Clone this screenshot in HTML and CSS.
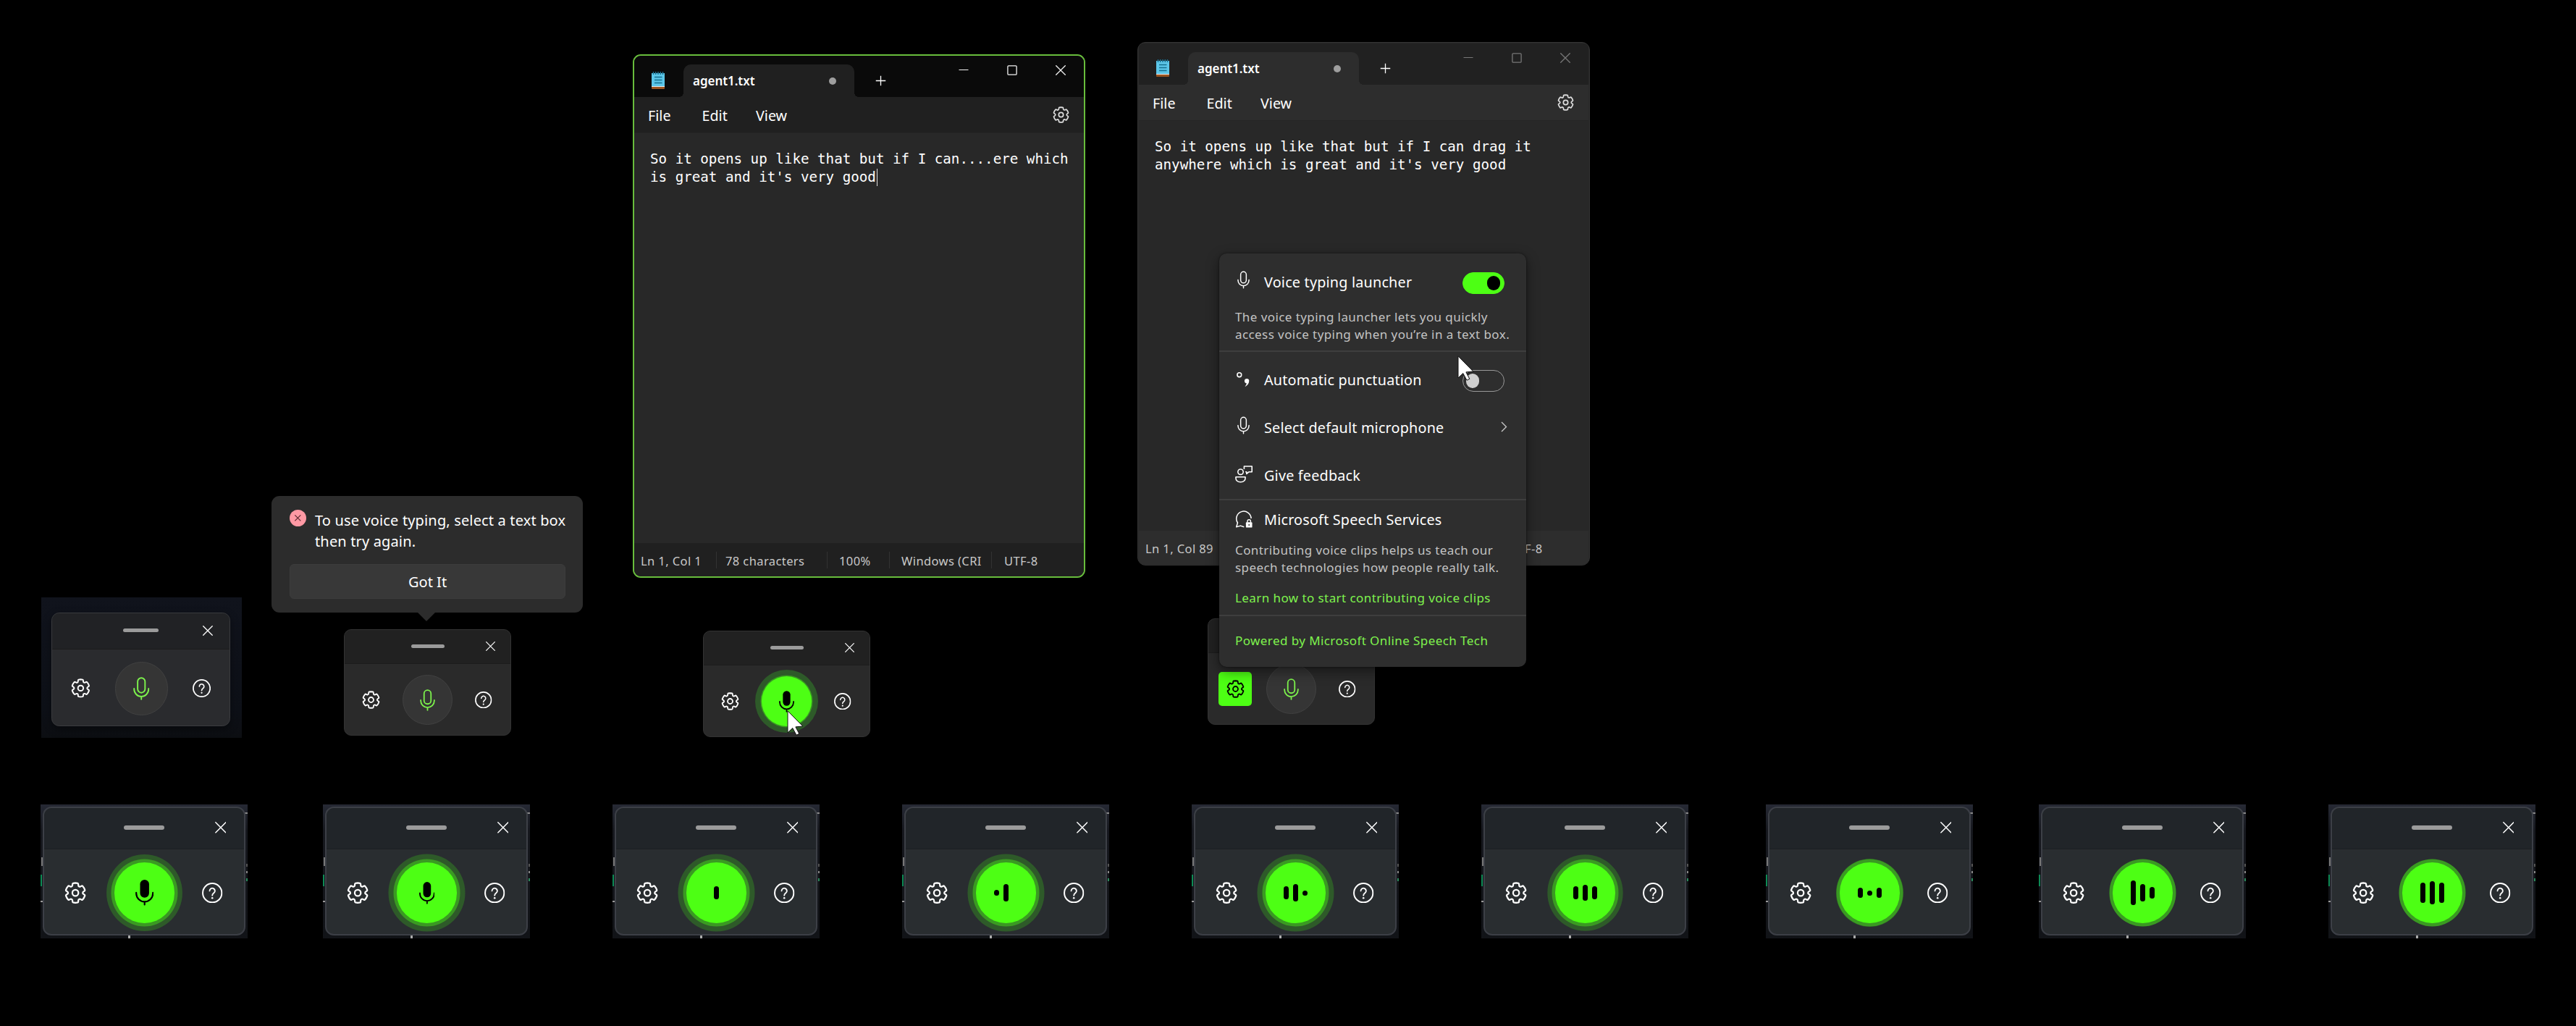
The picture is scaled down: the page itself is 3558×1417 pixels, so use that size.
FILE: index.html
```html
<!DOCTYPE html>
<html lang="en">
<head>
<meta charset="utf-8">
<title>Voice typing states</title>
<link rel="stylesheet" href="styles.css">
</head>
<body>
<svg class="sprite" aria-hidden="true">
  <symbol id="gear" viewBox="1.2 1.2 21.6 21.6"><g fill="none" stroke="currentColor" stroke-width="1.6" stroke-linejoin="round"><path d="M12.01 2.25C12.75 2.26 13.48 2.34 14.19 2.5C14.51 2.57 14.74 2.83 14.78 3.15L14.95 4.68C15.02 5.38 15.61 5.91 16.32 5.91C16.51 5.91 16.7 5.87 16.87 5.79L18.27 5.18C18.57 5.05 18.91 5.12 19.12 5.35C20.14 6.43 20.89 7.73 21.33 9.15C21.42 9.45 21.31 9.78 21.06 9.97L19.81 10.89C19.46 11.15 19.25 11.56 19.25 12C19.25 12.44 19.46 12.85 19.82 13.11L21.06 14.03C21.32 14.22 21.42 14.55 21.33 14.85C20.89 16.27 20.14 17.56 19.13 18.65C18.91 18.88 18.57 18.95 18.28 18.82L16.87 18.2C16.47 18.03 16.01 18.05 15.63 18.27C15.25 18.49 14.99 18.88 14.95 19.32L14.78 20.84C14.74 21.16 14.51 21.42 14.2 21.49C12.76 21.84 11.25 21.84 9.8 21.49C9.49 21.42 9.26 21.16 9.23 20.84L9.06 19.32C9.01 18.88 8.75 18.5 8.37 18.28C7.99 18.06 7.53 18.03 7.13 18.21L5.73 18.83C5.43 18.95 5.09 18.88 4.88 18.65C3.86 17.57 3.11 16.27 2.67 14.85C2.58 14.55 2.69 14.22 2.94 14.03L4.19 13.11C4.54 12.85 4.75 12.44 4.75 12C4.75 11.56 4.54 11.15 4.19 10.89L2.95 9.97C2.69 9.78 2.58 9.45 2.67 9.15C3.11 7.73 3.87 6.44 4.88 5.35C5.1 5.12 5.44 5.05 5.73 5.18L7.13 5.8C7.53 5.97 7.99 5.95 8.38 5.72C8.76 5.5 9.01 5.11 9.06 4.68L9.23 3.15C9.26 2.83 9.5 2.57 9.81 2.5C10.53 2.34 11.26 2.26 12.01 2.25Z"/><circle cx="12" cy="12" r="3"/></g></symbol>
  <symbol id="help" viewBox="0 0 24 24"><circle cx="12" cy="12" r="11.1" fill="none" stroke="currentColor" stroke-width="1.7"/><path d="M8.9 9.600a3.100 3.100 0 1 1 4.900 2.500c-1.200.9-1.800 1.500-1.800 2.800" fill="none" stroke="currentColor" stroke-width="1.6" stroke-linecap="round"/><circle cx="12" cy="18" r="1.1" fill="currentColor"/></symbol>
  <symbol id="mic" viewBox="0 0 22 31"><g fill="none" stroke="currentColor" stroke-width="1.9" stroke-linecap="round"><rect x="6" y="1" width="10" height="20" rx="5"/><path d="M1.2 15.5v.8a9.8 9.8 0 0 0 19.6 0v-.8M11 26.1v3.9"/></g></symbol>
  <symbol id="mic-solid" viewBox="0 0 22 31"><rect x="5.6" y="0" width="10.8" height="21.5" rx="5.4" fill="currentColor"/><path d="M1 15.5v.8a10 10 0 0 0 20 0v-.8M11 26.3v3.7" fill="none" stroke="currentColor" stroke-width="1.9" stroke-linecap="round"/></symbol>
  <symbol id="close" viewBox="0 0 14 14"><path d="M.7.7l12.6 12.6M13.3.7L.7 13.3" stroke="currentColor" stroke-width="1.3" stroke-linecap="round"/></symbol>
  <symbol id="minimize" viewBox="0 0 14 14"><path d="M.5 6.500h13" stroke="currentColor" stroke-width="1.2"/></symbol>
  <symbol id="maximize" viewBox="0 0 14 14"><rect x=".9" y=".9" width="12.2" height="12.2" rx="1.2" fill="none" stroke="currentColor" stroke-width="1.3"/></symbol>
  <symbol id="plus" viewBox="0 0 16 16"><path d="M8 .8v14.4M.8 8h14.4" stroke="currentColor" stroke-width="1.4"/></symbol>
  <symbol id="chevron" viewBox="0 0 9 15"><path d="M1 1l6.5 6.5L1 14" fill="none" stroke="currentColor" stroke-width="1.3"/></symbol>
  <symbol id="cursor" viewBox="0 0 23 35"><path d="M1 .8V31l6.800-6.400 5.200 9.600 3.800-1.900-4.900-9.400 9.900-.9Z" fill="#fff" stroke="#111" stroke-width="1"/></symbol>
  <symbol id="notepad" viewBox="0 0 18 24"><rect y="19" width="18" height="5" rx="1" fill="#9a5420"/><rect y="17" width="18" height="4" fill="#e8e8e8"/><rect y="2" width="18" height="18" fill="#5cc6e8"/><path d="M2.5 0v4M5.700 0v4M9 0v4M12.300 0v4M15.500 0v4" stroke="#1b6f8f" stroke-width="1.5"/><path d="M4 7.500h10.500M4 11.500h10.500M4 15.500h10.500" stroke="#14708f" stroke-width="1.5"/></symbol>
  <symbol id="punctuation" viewBox="0 0 18 20"><circle cx="3.8" cy="3.7" r="2.9" fill="none" stroke="currentColor" stroke-width="1.6"/><path d="M11.600 19.500c1.400-1.200 2.100-2.700 2.100-4.200a3.200 3.200 0 1 1 3.600-3.500c0 3.600-2 6.400-5.100 7.900Z" fill="currentColor"/></symbol>
  <symbol id="feedback" viewBox="0 0 24 24"><g fill="none" stroke="currentColor" stroke-width="1.6" stroke-linejoin="round"><circle cx="7.5" cy="8.7" r="3.7"/><path d="M1 15.800h13c.6 4.500-2.300 7-6.500 7S.4 20.300 1 15.800Z"/><path d="M12.400 5V1h10.800v7.800h-4.400l-3 2.600V8.800h-1.700"/></g></symbol>
  <symbol id="speech" viewBox="0 0 24 25"><path d="M22.500 11.500a10.600 10.600 0 1 0-19.400 6.200L1.300 23.600l6-1.600 5 1.600" fill="none" stroke="currentColor" stroke-width="1.6" stroke-linejoin="round"/><rect x="15" y="17" width="9" height="7.6" rx="1" fill="currentColor"/><path d="M17.200 17.500v-2a2.300 2.300 0 0 1 4.600 0v2" fill="none" stroke="currentColor" stroke-width="1.5"/><circle cx="19.5" cy="20.8" r="1" fill="#2e2e2e"/></symbol>
</svg>

<main class="board">
  <section class="notepad notepad--active">
    <header class="titlebar">
      <svg class="app-icon"><use href="#notepad"/></svg>
      <div class="tab"><span class="tab-name">agent1.txt</span><i class="unsaved"></i></div>
      <svg class="new-tab"><use href="#plus"/></svg>
      <nav class="controls"><svg><use href="#minimize"/></svg><svg><use href="#maximize"/></svg><svg><use href="#close"/></svg></nav>
    </header>
    <nav class="menubar"><span>File</span><span>Edit</span><span>View</span><svg><use href="#gear"/></svg></nav>
    <div class="editor">So it opens up like that but if I can....ere which<br>is great and it's very good<i class="caret"></i></div>
    <footer class="statusbar"><span class="c1">Ln 1, Col 1</span><span class="c2">78 characters</span><span class="c3">100%</span><span class="c4">Windows (CRI</span><span class="c5">UTF-8</span></footer>
  </section>

  <section class="notepad notepad--idle">
    <header class="titlebar">
      <svg class="app-icon"><use href="#notepad"/></svg>
      <div class="tab"><span class="tab-name">agent1.txt</span><i class="unsaved"></i></div>
      <svg class="new-tab"><use href="#plus"/></svg>
      <nav class="controls"><svg><use href="#minimize"/></svg><svg><use href="#maximize"/></svg><svg><use href="#close"/></svg></nav>
    </header>
    <nav class="menubar"><span>File</span><span>Edit</span><span>View</span><svg><use href="#gear"/></svg></nav>
    <div class="editor">So it opens up like that but if I can drag it<br>anywhere which is great and it's very good</div>
    <footer class="statusbar"><span class="c1">Ln 1, Col 89</span><span class="c2"></span><span class="c3"></span><span class="c4"></span><span class="c5">UTF-8</span></footer>
  </section>

  <div class="backdrop">
    <section class="voice voice--medium">
      <header><i class="handle"></i><svg class="close"><use href="#close"/></svg></header>
      <div class="tools"><svg class="gear"><use href="#gear"/></svg><span class="talk"><svg class="mic"><use href="#mic"/></svg></span><svg class="help"><use href="#help"/></svg></div>
    </section>
  </div>

  <aside class="teaching">
    <svg class="error" viewBox="0 0 23 23"><circle cx="11.5" cy="11.5" r="11.5" fill="#ff99a4"/><path d="M7.3 7.3l8 8M15.3 7.3l-8 8" stroke="#5c2a30" stroke-width="1.2"/></svg>
    <p>To use voice typing, select a text box<br>then try again.</p>
    <button>Got It</button>
  </aside>

  <section class="voice voice--ready">
    <header><i class="handle"></i><svg class="close"><use href="#close"/></svg></header>
    <div class="tools"><svg class="gear"><use href="#gear"/></svg><span class="talk"><svg class="mic"><use href="#mic"/></svg></span><svg class="help"><use href="#help"/></svg></div>
  </section>

  <section class="voice voice--pressed">
    <header><i class="handle"></i><svg class="close"><use href="#close"/></svg></header>
    <div class="tools"><svg class="gear"><use href="#gear"/></svg><span class="talk talk--on"><svg class="mic"><use href="#mic-solid"/></svg></span><svg class="help"><use href="#help"/></svg></div>
    <svg class="cursor"><use href="#cursor"/></svg>
  </section>

  <section class="voice voice--settings">
    <header></header>
    <div class="tools"><span class="gear-on"><svg class="gear"><use href="#gear"/></svg></span><span class="talk"><svg class="mic"><use href="#mic"/></svg></span><svg class="help"><use href="#help"/></svg></div>
  </section>

  <aside class="flyout">
    <div class="group group--launcher">
      <div class="row"><svg class="i-mic"><use href="#mic"/></svg><span>Voice typing launcher</span><i class="toggle toggle--on"></i></div>
      <p>The voice typing launcher lets you quickly<br>access voice typing when you’re in a text box.</p>
    </div>
    <div class="group group--options">
      <div class="row"><svg class="i-punct"><use href="#punctuation"/></svg><span>Automatic punctuation</span><i class="toggle"></i></div>
      <div class="row"><svg class="i-mic"><use href="#mic"/></svg><span>Select default microphone</span><svg class="chevron"><use href="#chevron"/></svg></div>
      <div class="row"><svg class="i-wide"><use href="#feedback"/></svg><span>Give feedback</span></div>
    </div>
    <div class="group group--speech">
      <div class="row"><svg class="i-wide"><use href="#speech"/></svg><span>Microsoft Speech Services</span></div>
      <p>Contributing voice clips helps us teach our<br>speech technologies how people really talk.</p>
      <a>Learn how to start contributing voice clips</a>
    </div>
    <div class="group group--powered"><a>Powered by Microsoft Online Speech Tech</a></div>
    <svg class="cursor"><use href="#cursor"/></svg>
  </aside>

  <div class="frame f1"><section class="voice"><header><i class="handle"></i><svg class="close"><use href="#close"/></svg></header><div class="tools"><svg class="gear"><use href="#gear"/></svg><span class="talk talk--on"><svg class="mic mic--large"><use href="#mic-solid"/></svg></span><svg class="help"><use href="#help"/></svg></div></section></div>
  <div class="frame f2"><section class="voice"><header><i class="handle"></i><svg class="close"><use href="#close"/></svg></header><div class="tools"><svg class="gear"><use href="#gear"/></svg><span class="talk talk--on"><svg class="mic"><use href="#mic-solid"/></svg></span><svg class="help"><use href="#help"/></svg></div></section></div>
  <div class="frame f3"><section class="voice"><header><i class="handle"></i><svg class="close"><use href="#close"/></svg></header><div class="tools"><svg class="gear"><use href="#gear"/></svg><span class="talk talk--on"><i class="bar" style="height:18px"></i></span><svg class="help"><use href="#help"/></svg></div></section></div>
  <div class="frame f4"><section class="voice"><header><i class="handle"></i><svg class="close"><use href="#close"/></svg></header><div class="tools"><svg class="gear"><use href="#gear"/></svg><span class="talk talk--on"><i class="bar" style="height:8px"></i><i class="bar" style="height:24px"></i><i class="bar" style="height:0"></i></span><svg class="help"><use href="#help"/></svg></div></section></div>
  <div class="frame f5"><section class="voice"><header><i class="handle"></i><svg class="close"><use href="#close"/></svg></header><div class="tools"><svg class="gear"><use href="#gear"/></svg><span class="talk talk--on"><i class="bar" style="height:18px"></i><i class="bar" style="height:24px"></i><i class="bar" style="height:7px"></i></span><svg class="help"><use href="#help"/></svg></div></section></div>
  <div class="frame f6"><section class="voice"><header><i class="handle"></i><svg class="close"><use href="#close"/></svg></header><div class="tools"><svg class="gear"><use href="#gear"/></svg><span class="talk talk--on"><i class="bar" style="height:18px"></i><i class="bar" style="height:22px"></i><i class="bar" style="height:18px"></i></span><svg class="help"><use href="#help"/></svg></div></section></div>
  <div class="frame f7"><section class="voice"><header><i class="handle"></i><svg class="close"><use href="#close"/></svg></header><div class="tools"><svg class="gear"><use href="#gear"/></svg><span class="talk talk--on"><i class="bar" style="height:14px"></i><i class="bar" style="height:7px"></i><i class="bar" style="height:14px"></i></span><svg class="help"><use href="#help"/></svg></div></section></div>
  <div class="frame f8"><section class="voice"><header><i class="handle"></i><svg class="close"><use href="#close"/></svg></header><div class="tools"><svg class="gear"><use href="#gear"/></svg><span class="talk talk--on"><i class="bar" style="height:34px"></i><i class="bar" style="height:24px"></i><i class="bar" style="height:16px"></i></span><svg class="help"><use href="#help"/></svg></div></section></div>
  <div class="frame f9"><section class="voice"><header><i class="handle"></i><svg class="close"><use href="#close"/></svg></header><div class="tools"><svg class="gear"><use href="#gear"/></svg><span class="talk talk--on"><i class="bar" style="height:28px"></i><i class="bar" style="height:32px"></i><i class="bar" style="height:28px"></i></span><svg class="help"><use href="#help"/></svg></div></section></div>
</main>
</body>
</html>
```
FILE: styles.css
```css
* { box-sizing: border-box; }

body {
  margin: 0;
  background: #000;
  color: #fff;
  font-family: "Noto Sans", "Open Sans", sans-serif;
}

svg { display: block; flex: none; }
i { display: block; }
.sprite { position: absolute; width: 0; height: 0; }

.board {
  position: relative;
  width: 3558px;
  height: 1417px;
  overflow: hidden;
}

/* Notepad windows */
.notepad {
  position: absolute;
  display: flex;
  flex-direction: column;
  width: 625px;
  height: 723px;
  border: 1px solid #333;
  border-radius: 11px;
  overflow: hidden;
  background: #282828;
  --bar: #2d2d2d;
  --title: #212121;
  --control: #777;
}
.notepad--active {
  left: 874px;
  top: 75px;
  border: 2px solid #68bd3c;
  --bar: #202020;
  --title: #0a0a0a;
  --control: #f2f2f2;
}
.notepad--idle { left: 1571px; top: 58px; padding: 1px; }

.titlebar {
  display: flex;
  height: 57px;
  background: var(--title);
}
.app-icon { width: 18px; height: 24px; margin: 22px 26px 0 24px; }
.tab {
  position: relative;
  display: flex;
  align-items: center;
  justify-content: space-between;
  width: 236px;
  height: 45px;
  margin-top: 12px;
  padding: 0 25px 0 13px;
  border-radius: 10px 10px 0 0;
  background: var(--bar);
}
.tab::before, .tab::after {
  content: "";
  position: absolute;
  bottom: 0;
  width: 6px;
  height: 6px;
}
.tab::before { left: -6px; background: radial-gradient(circle at 0 0, transparent 6px, var(--bar) 6px); }
.tab::after { right: -6px; background: radial-gradient(circle at 100% 0, transparent 6px, var(--bar) 6px); }
.tab-name { font-size: 17px; font-weight: 600; letter-spacing: -.05px; }
.unsaved { width: 10px; height: 10px; border-radius: 50%; background: #9e9e9e; }
.new-tab { width: 15px; height: 15px; margin: 27px 0 0 29px; }
.controls {
  display: flex;
  gap: 53px;
  margin: 13px 0 0 100px;
  color: var(--control);
}
.controls svg { width: 14px; height: 14px; }

.menubar {
  display: flex;
  align-items: center;
  height: 49px;
  padding: 1px 0 0 19px;
  background: var(--bar);
  font-size: 19.700px;
}
.menubar span { width: 74.500px; }
.menubar svg { width: 23px; height: 23px; margin: 0 0 2px 335px; color: #ddd; }

.editor {
  flex: 1;
  padding: 24px 0 0 22px;
  border-top: 1px solid #252525;
  font: 19.200px/24.500px "DejaVu Sans Mono", monospace;
  white-space: nowrap;
}
.caret { display: inline-block; width: 1px; height: 24px; margin-left: 1px; vertical-align: -6px; background: #ddd; }

.statusbar {
  display: flex;
  align-items: center;
  height: 46px;
  padding: 1px 0 0 9px;
  background: var(--bar);
  color: #c8c8c8;
  font-size: 16.500px;
  letter-spacing: .4px;
  white-space: nowrap;
}
.statusbar span { height: 23px; line-height: 25px; border-right: 1px solid #323232; }
.notepad--idle .statusbar span { border-color: transparent; }
.c1 { width: 105px; }
.c2 { width: 153px; padding-left: 12px; }
.c3 { width: 86px; padding-left: 16px; }
.c4 { width: 141px; padding-left: 16px; }
.c5 { padding-left: 17px; }
.statusbar .c5 { border: 0; }

/* Voice typing bar: 1em is a tenth of its base size */
.voice {
  position: absolute;
  display: flex;
  flex-direction: column;
  width: 23.1em;
  height: 14.7em;
  border: 1px solid #333;
  border-radius: 1em;
  background: #2a2a2a;
  font-size: 10px;
}
.voice header {
  position: relative;
  display: flex;
  align-items: center;
  justify-content: center;
  height: 4.7em;
  padding-bottom: .2em;
  border-bottom: 1px solid #1c1c1c;
  border-radius: .9em .9em 0 0;
  background: #212121;
}
.handle { width: 4.6em; height: .5em; border-radius: .25em; background: #9b9b9b; }
.close { position: absolute; right: 2.15em; width: 1.3em; height: 1.3em; }
.tools {
  flex: 1;
  display: grid;
  grid-template-columns: 7.4em 8.1em 7.4em;
  align-items: center;
  justify-items: center;
  padding-top: .1em;
}
.gear { width: 2.5em; height: 2.5em; }
.tools > .gear { margin-right: .2em; }
.help { width: 2.35em; height: 2.35em; }
.talk {
  display: flex;
  align-items: center;
  justify-content: center;
  gap: 6px;
  width: 6.9em;
  height: 6.9em;
  border: 1px solid #414141;
  border-radius: 50%;
  background: #353535;
  color: #7df24c;
}
.talk--on {
  border: 0;
  background: #4dff14;
  color: #000;
  box-shadow: 0 0 0 .37em #3a9a22, 0 0 0 var(--halo, .95em) #2e5a29;
}
.mic { width: 2.1em; height: 3em; }
.bar { width: 7px; border-radius: 4px; background: #000; }

.voice--ready { left: 475px; top: 869px; }
.voice--pressed { left: 971px; top: 871px; }
.voice--pressed .talk--on { box-shadow: 0 0 0 .15em #3a9a22, 0 0 0 .9em #2e5a29; }
.voice--settings { left: 1668px; top: 854px; }
.gear-on {
  display: grid;
  place-items: center;
  width: 46px;
  height: 47px;
  border-radius: 5px;
  background: #4dff14;
  color: #000;
}
.cursor { position: absolute; width: 23px; height: 35px; }
.voice--pressed .cursor { left: 115px; top: 109px; }

.backdrop {
  position: absolute;
  left: 57px;
  top: 825px;
  width: 277px;
  height: 194px;
  padding: 21px 14px;
  background: linear-gradient(#10131c, #0d1017 80%, #0c0e12);
}
.voice--medium {
  position: static;
  font-size: 10.7px;
  border-color: #3a3b3e;
  background: #2a2b2e;
  box-shadow: 0 4px 12px #0006;
}
.voice--medium header { background: #212225; }
.voice--medium .tools { padding: .2em 0 0 .1em; }

/* Captured animation frames */
.frame {
  position: absolute;
  top: 1111px;
  width: 286px;
  height: 185px;
  padding: 3px;
  background:
    linear-gradient(#888, #888) 282px 11px / 4px 2px no-repeat,
    linear-gradient(#555, #555) 284px 82px / 2px 4px no-repeat,
    linear-gradient(#888, #888) 284px 92px / 2px 3px no-repeat,
    linear-gradient(#2b8a5c, #2b8a5c) 284px 102px / 2px 4px no-repeat,
    linear-gradient(#777, #777) 1px 73px / 2px 12px no-repeat,
    linear-gradient(#0d8a55, #0d8a55) 0 97px / 2px 16px no-repeat,
    linear-gradient(#999, #999) 0 133px / 4px 2px no-repeat,
    linear-gradient(#aaa, #aaa) 121px 181px / 3px 4px no-repeat,
    linear-gradient(#262934, #16181e 20%, #111317);
}
.frame .voice {
  position: static;
  font-size: 12.1px;
  border: 2px solid #3c3f46;
  background: #292d30;
}
.frame .voice header { background: #212529; border-color: #1c1f22; }
.frame .close { right: 2em; }
.frame .tools { padding-top: .3em; }
.frame .mic { width: 1.8em; height: 2.55em; }
.frame .mic--large { width: 2.1em; height: 2.95em; }
.f1 { left: 56px; --halo: .9em; }
.f2 { left: 446px; }
.f3 { left: 846px; }
.f4 { left: 1246px; }
.f5 { left: 1646px; }
.f6 { left: 2046px; --halo: .88em; }
.f7 { left: 2439px; --halo: .42em; }
.f8 { left: 2816px; --halo: 0; }
.f9 { left: 3216px; --halo: 0; }

/* Teaching tip */
.teaching {
  position: absolute;
  left: 375px;
  top: 685px;
  display: grid;
  grid-template-columns: 35px 1fr;
  width: 430px;
  height: 161px;
  padding: 19px 24px 19px 25px;
  border-radius: 11px;
  background: #2c2c2c;
  font-size: 20px;
  letter-spacing: .15px;
}
.teaching::after {
  content: "";
  position: absolute;
  left: 201px;
  top: 160px;
  border: 13px solid transparent;
  border-top-color: #2c2c2c;
  border-bottom: 0;
}
.error { width: 23px; height: 23px; }
.teaching p { margin: 0; line-height: 29.3px; white-space: nowrap; }
.teaching button {
  grid-column: 1 / 3;
  align-self: end;
  height: 48px;
  padding: 0;
  border: 1px solid #3c3c3c;
  border-radius: 6px;
  background: #383838;
  color: #fff;
  font: inherit;
}

/* Settings flyout */
.flyout {
  position: absolute;
  left: 1684px;
  top: 350px;
  width: 424px;
  height: 571px;
  border-radius: 10px;
  background: #2e2e2e;
  box-shadow: 0 6px 18px #0007, 0 0 3px #0008;
  white-space: nowrap;
}
.group { border-bottom: 2px solid #3e3e3e; padding: 0 0 0 22px; }
.group--launcher { height: 136px; }
.group--options { height: 205px; padding-top: 5px; }
.group--speech { height: 160px; }
.group--powered { height: 70px; padding-top: 22px; border: 0; }
.row {
  display: flex;
  align-items: center;
  height: 66px;
  padding-right: 30px;
  font-size: 19.8px;
  letter-spacing: .2px;
}
.group--launcher .row { height: 78px; }
.group--speech .row { height: 53px; }
.group p, .group a { font-size: 17px; line-height: 24px; letter-spacing: .42px; }
.group p { margin: -2px 0 0; color: #c3c3c3; }
.group--speech p { margin-top: 4px; }
.group a { display: block; color: #7ef24d; }
.group--speech a { margin-top: 18px; }
.i-mic { width: 17px; height: 25px; margin: 0 20px 5px 3px; }
.i-punct { width: 18px; height: 20px; margin: 0 20px 0 2px; }
.i-wide { width: 24px; height: 24px; margin: 0 16px 2px 0; }
.chevron { width: 9px; height: 15px; margin: 0 -4px 2px auto; color: #ccc; }
.toggle {
  width: 58px;
  height: 30px;
  margin: 3px 0 0 auto;
  padding: 4px;
  border: 1px solid #999;
  border-radius: 15px;
}
.toggle::before { content: ""; display: block; width: 18px; height: 20px; border-radius: 9px; background: #cfcfcf; }
.toggle--on { border-color: #4dff14; background: #4dff14; }
.toggle--on::before { margin-left: 29px; background: #000; }
.flyout .cursor { left: 329px; top: 141px; }
```
